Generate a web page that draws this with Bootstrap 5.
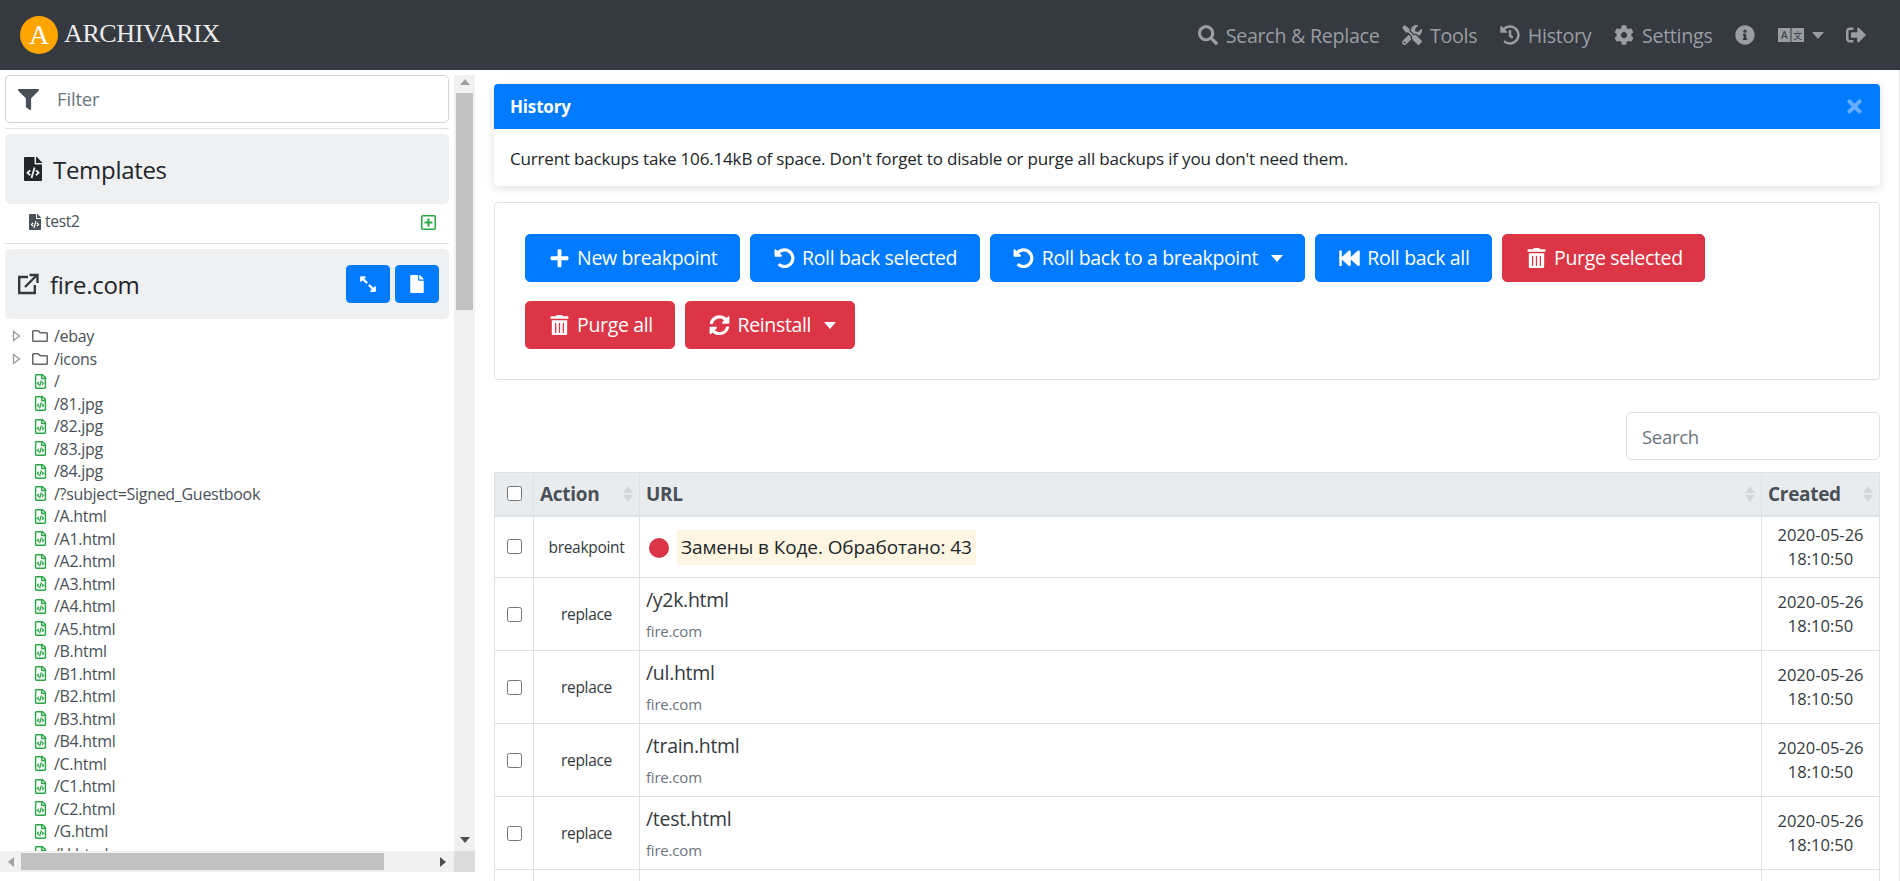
<!DOCTYPE html>
<html lang="en">
<head>
  <meta charset="UTF-8" />
  <meta name="viewport" content="width=device-width, initial-scale=1.0"/>
  <title>History - Archivarix</title>
  <link href="https://cdn.jsdelivr.net/npm/bootstrap@5.3.0/dist/css/bootstrap.min.css" rel="stylesheet"/>
  <style>
    html, body { height: 881px; overflow: hidden; }
    body { font-family: "Open Sans", sans-serif; font-size: 17px; letter-spacing: -.17px; color: #212529; background: #fff; }
    .ico { width: 1em; height: 1em; fill: currentColor; flex: none; }
    .arc-nav { height: 70px; background: #343a40; padding: 0 34px 0 20px; }
    .arc-logo { width: 38px; height: 38px; border-radius: 50%; background: #ffa500; color: #fff; font: 28px/38px "Liberation Serif", serif; text-align: center; }
    .arc-name { font: 26px "Liberation Serif", serif; color: #ebebeb; letter-spacing: -.4px; margin: 0 0 3px 6px; }
    .arc-link { color: #9a9da1; font-size: 19.7px; letter-spacing: -.3px; text-decoration: none; display: flex; align-items: center; gap: 8px; }
    .arc-link .ico { font-size: 20px; }
    .arc-links { gap: 22.5px; margin-top: 1px; }
    .caret-down { border-top: 7px solid currentColor; border-left: 6px solid transparent; border-right: 6px solid transparent; display: inline-block; }
    .arc-wrap { height: 811px; }
    .side { width: 475px; flex: none; padding-bottom: 9px; }
    .side-body { min-height: 0; }
    .side-in { padding: 5px 5px 0; overflow: hidden; min-width: 0; }
    .filter-box { height: 48px; border: 1px solid #ced4da; border-radius: 5px; padding: 0 12px; gap: 18px; color: #6c757d; font-size: 18.5px; }
    .filter-box .ico { color: #495057; font-size: 21px; }
    .side-rule { border-top: 1px solid #dee2e6; margin: 5px 0; }
    .side-head { height: 70px; background: #eff0f2; border-radius: 5px; font-size: 24px; letter-spacing: -.3px; color: #212529; }
    .head-plain { padding: 0 16px; gap: 8px; }
    .head-site { padding: 0 10px 0 12px; }
    .head-label { margin-top: 2px; }
    .site-title { gap: 11px; }
    .site-btns { gap: 5px; }
    .side-tpl { height: 34px; font-size: 15.5px; letter-spacing: -.3px; color: #495057; padding: 2px 13px 0 22px; }
    .side-tpl .ico { font-size: 16px; margin-right: 2px; }
    .side-btn { width: 44px; height: 38px; padding: 0; display: flex; align-items: center; justify-content: center; background: #007bff; border-color: #007bff; border-radius: 4px; }
    .side-btn .ico { font-size: 18px; }
    .tree { padding-top: 6px; font-size: 16px; letter-spacing: -.3px; color: #495057; }
    .tree-row { height: 22.5px; line-height: 22.5px; display: flex; align-items: center; white-space: nowrap; padding-left: 28px; }
    .tree-row .ico { color: #28a745; font-size: 15px; margin-right: 6px; }
    .tree-dir { padding-left: 7px; }
    .tree-dir .arrow { width: 9px; height: 12px; margin-right: 11px; flex: none; }
    .tree-dir .ico { color: #666; font-size: 16px; margin-right: 6px; }
    .vbar { width: 21px; flex: none; background: #f1f1f1; margin-top: 5px; padding: 0 2px; }
    .vthumb { height: 217px; background: #c1c1c1; }
    .hbar { height: 21px; background: #f1f1f1; flex: none; }
    .hbar-end { width: 21px; }
    .hthumb { width: 363px; height: 17px; background: #c1c1c1; }
    .sb-up { height: 0; border-bottom: 6px solid #a0a0a0; border-left: 5px solid transparent; border-right: 5px solid transparent; width: 0; }
    .sb-down { height: 0; border-top: 6px solid #505050; border-left: 5px solid transparent; border-right: 5px solid transparent; width: 0; }
    .sb-left { width: 0; border-right: 6px solid #a0a0a0; border-top: 5px solid transparent; border-bottom: 5px solid transparent; }
    .sb-right { width: 0; border-left: 6px solid #505050; border-top: 5px solid transparent; border-bottom: 5px solid transparent; }
    .sb-corner { width: 21px; height: 21px; background: #dcdcdc; }
    .arc-main { padding: 14px 19px 0 19px; min-width: 0; overflow: hidden; border-right: 1px solid #e6e6e6; }
    .hist-card { border: 0; border-radius: 4px; box-shadow: 0 2px 10px rgba(0,0,0,.13); margin-bottom: 16px; }
    .hist-head { height: 45px; background: #007bff; color: #fff; font-weight: 700; font-size: 17px; padding: 0 15px 0 16px; border-radius: 4px 4px 0 0; }
    .hist-head .ico { font-size: 21px; color: #66aeff; }
    .hist-text { height: 57px; padding: 2px 15px 0 16px; }
    .act-card { border: 1px solid #dee2e6; border-radius: 4px; height: 178px; padding: 31px 30px; row-gap: 19px; margin-bottom: 32px; }
    .act-row { column-gap: 10px; }
    .act-btn { height: 48px; padding: 0 21.5px 0 22.6px; font-size: 19.5px; letter-spacing: -.35px; display: inline-flex; align-items: center; gap: 7.5px; border-radius: 5px; color: #fff; white-space: nowrap; }
    .act-btn.btn-primary { background: #007bff; border-color: #007bff; }
    .act-btn.btn-danger { background: #dc3545; border-color: #dc3545; }
    .act-btn.act-short { padding-right: 18px; }
    .act-btn .ico { font-size: 20.5px; width: 21px; }
    .act-btn .caret-down { margin-left: 5px; }
    .search-box { width: 254px; height: 48px; font-size: 18.5px; letter-spacing: -.3px; border-radius: 5px; margin-bottom: 12px; padding-left: 15px; }
    .search-box::placeholder { color: #6c757d; }
    .hist-table { table-layout: fixed; width: 1386px; margin: 0; border-color: #dee2e6; }
    .hist-table th, .hist-table td { padding: 0 6px; vertical-align: middle; border-color: #dee2e6; }
    .hist-table thead th { height: 43px; background: #e9ecef; color: #495057; font-size: 19px; font-weight: 700; letter-spacing: -.3px; border-bottom: 2px solid #dee2e6; }
    .hist-table tbody tr { height: 73px; }
    .hist-table tbody tr.row-bp { height: 62px; }
    .hist-table tbody .col-act { padding-top: 2px; }
    .hist-table tbody .bp-cell { padding-top: 2px; }
    .col-chk { width: 39px; text-align: center; }
    .col-act { width: 106px; text-align: center; font-size: 15.5px; letter-spacing: -.3px; color: #343a40; }
    .col-date { width: 118px; text-align: center; font-size: 16.5px; letter-spacing: 0; line-height: 24px; color: #343a40; }
    .chk-box { width: 15px; height: 15px; display: block; margin: 0 auto; }
    .sort-mark { display: flex; flex-direction: column; gap: 2px; flex: none; }
    .sort-mark i { display: block; width: 0; border-left: 5px solid transparent; border-right: 5px solid transparent; }
    .sort-mark i:first-child { border-bottom: 7px solid #d4d7da; }
    .sort-mark i:last-child { border-top: 7px solid #d4d7da; }
    .bp-dot { width: 20px; height: 20px; border-radius: 50%; background: #dc3545; flex: none; margin-left: 3px; margin-right: 8px; }
    .bp-text { background: #fdf6e3; padding: 0 4px; font-size: 19px; line-height: 35px; letter-spacing: -.1px; }
    .url-main { font-size: 19.5px; letter-spacing: -.3px; color: #343a40; line-height: 27px; margin-top: -1px; }
    .url-host { font-size: 15px; letter-spacing: -.2px; color: #6c757d; line-height: 22px; margin-top: 7px; }
  </style>
</head>
<body>
  <svg width="0" height="0" class="position-absolute">
    <symbol id="i-search" viewBox="0 0 512 512"><path d="M505 442.7L405.3 343c-4.5-4.5-10.6-7-17-7H372c27.6-35.3 44-79.7 44-128C416 93.1 322.9 0 208 0S0 93.1 0 208s93.1 208 208 208c48.3 0 92.7-16.4 128-44v16.3c0 6.4 2.5 12.5 7 17l99.7 99.7c9.4 9.4 24.6 9.4 33.9 0l28.3-28.3c9.4-9.4 9.4-24.6.1-34zM208 336c-70.7 0-128-57.2-128-128 0-70.7 57.2-128 128-128 70.7 0 128 57.2 128 128 0 70.7-57.2 128-128 128z"/></symbol>
    <symbol id="i-filter" viewBox="0 0 512 512"><path d="M487.976 0H24.028C2.71 0-8.047 25.866 7.058 40.971L192 225.941V432c0 7.831 3.821 15.17 10.237 19.662l80 55.98C298.02 518.69 320 507.493 320 487.98V225.941l184.947-184.97C520.021 25.896 509.338 0 487.976 0z"/></symbol>
    <symbol id="i-tools" viewBox="0 0 512 512"><path d="M501.1 395.7L384 278.6c-23.1-23.1-57.6-27.6-85.4-13.9L192 158.1V96L64 0 0 64l96 128h62.1l106.6 106.6c-13.6 27.8-9.2 62.3 13.9 85.4l117.1 117.1c14.6 14.6 38.2 14.6 52.7 0l52.7-52.7c14.5-14.6 14.5-38.2 0-52.7zM331.7 225c28.3 0 54.9 11 74.9 31l19.4 19.4c15.8-6.9 30.8-16.5 43.8-29.5 37.1-37.1 49.7-89.3 37.9-136.7-2.2-9-13.5-12.1-20.1-5.5l-74.4 74.4-67.9-11.3L334 98.9l74.4-74.4c6.6-6.6 3.4-17.9-5.7-20.2-47.4-11.7-99.6.9-136.6 37.9-28.5 28.5-41.9 66.1-41.2 103.6l82.1 82.1c8.1-1.9 16.5-2.9 24.7-2.9zm-103.9 82l-56.7-56.7L18.7 402.8c-25 25-25 65.5 0 90.5s65.5 25 90.5 0l123.6-123.6c-7.6-19.9-9.9-41.6-5-62.7zM64 472c-13.2 0-24-10.8-24-24 0-13.3 10.7-24 24-24s24 10.7 24 24c0 13.2-10.7 24-24 24z"/></symbol>
    <symbol id="i-history" viewBox="0 0 512 512"><path d="M504 255.531c.253 136.64-111.18 248.372-247.82 248.468-59.015.042-113.223-20.53-155.822-54.911-11.077-8.94-11.905-25.541-1.839-35.607l11.267-11.267c8.609-8.609 22.353-9.551 31.891-1.984C173.062 425.135 212.781 440 256 440c101.705 0 184-82.311 184-184 0-101.705-82.311-184-184-184-48.814 0-93.149 18.969-126.068 49.932l50.754 50.754c10.08 10.08 2.941 27.314-11.313 27.314H24c-8.837 0-16-7.163-16-16V38.627c0-14.254 17.234-21.393 27.314-11.314l49.372 49.372C129.209 34.136 189.552 8 256 8c136.81 0 247.747 110.78 248 247.531zm-180.912 78.784l9.823-12.63c8.138-10.463 6.253-25.542-4.21-33.679L288 256.349V152c0-13.255-10.745-24-24-24h-16c-13.255 0-24 10.745-24 24v135.651l65.409 50.874c10.463 8.137 25.541 6.253 33.679-4.21z"/></symbol>
    <symbol id="i-cog" viewBox="0 0 512 512"><path d="M487.4 315.7l-42.6-24.6c4.3-23.2 4.3-47 0-70.2l42.6-24.6c4.9-2.8 7.1-8.6 5.5-14-11.1-35.6-30-67.8-54.7-94.6-3.8-4.1-10-5.1-14.8-2.3L380.8 110c-17.9-15.4-38.5-27.3-60.8-35.1V25.8c0-5.6-3.9-10.5-9.4-11.7-36.7-8.2-74.3-7.8-109.2 0-5.5 1.2-9.4 6.1-9.4 11.7V75c-22.2 7.9-42.8 19.8-60.8 35.1L88.7 85.5c-4.9-2.8-11-1.9-14.8 2.3-24.7 26.7-43.6 58.9-54.7 94.6-1.7 5.4.6 11.2 5.5 14L67.3 221c-4.3 23.2-4.3 47 0 70.2l-42.6 24.6c-4.9 2.8-7.1 8.6-5.5 14 11.1 35.6 30 67.8 54.7 94.6 3.8 4.1 10 5.1 14.8 2.3l42.6-24.6c17.9 15.4 38.5 27.3 60.8 35.1v49.2c0 5.6 3.9 10.5 9.4 11.7 36.7 8.2 74.3 7.8 109.2 0 5.5-1.2 9.4-6.1 9.4-11.7v-49.2c22.2-7.9 42.8-19.8 60.8-35.1l42.6 24.6c4.9 2.8 11 1.9 14.8-2.3 24.7-26.7 43.6-58.9 54.7-94.6 1.5-5.5-.7-11.3-5.6-14.1zM256 336c-44.1 0-80-35.9-80-80s35.9-80 80-80 80 35.9 80 80-35.9 80-80 80z"/></symbol>
    <symbol id="i-info" viewBox="0 0 512 512"><path d="M256 8C119.043 8 8 119.083 8 256c0 136.997 111.043 248 248 248s248-111.003 248-248C504 119.083 392.957 8 256 8zm0 110c23.196 0 42 18.804 42 42s-18.804 42-42 42-42-18.804-42-42 18.804-42 42-42zm56 254c0 6.627-5.373 12-12 12h-88c-6.627 0-12-5.373-12-12v-24c0-6.627 5.373-12 12-12h12v-64h-12c-6.627 0-12-5.373-12-12v-24c0-6.627 5.373-12 12-12h64c6.627 0 12 5.373 12 12v100h12c6.627 0 12 5.373 12 12v24z"/></symbol>
    <symbol id="i-out" viewBox="0 0 512 512"><path d="M497 273L329 441c-15 15-41 4.5-41-17v-96H152c-13.3 0-24-10.7-24-24v-96c0-13.3 10.7-24 24-24h136V88c0-21.4 25.9-32 41-17l168 168c9.3 9.4 9.3 24.6 0 34zM192 436v-40c0-6.6-5.4-12-12-12H96c-17.7 0-32-14.3-32-32V160c0-17.7 14.3-32 32-32h84c6.6 0 12-5.4 12-12V76c0-6.6-5.4-12-12-12H96c-53 0-96 43-96 96v192c0 53 43 96 96 96h84c6.6 0 12-5.4 12-12z"/></symbol>
    <symbol id="i-code" viewBox="0 0 384 512"><path d="M384 121.941V128H256V0h6.059c6.365 0 12.47 2.529 16.971 7.029l97.941 97.941A24.005 24.005 0 0 1 384 121.941zM248 160c-13.2 0-24-10.8-24-24V0H24C10.745 0 0 10.745 0 24v464c0 13.255 10.745 24 24 24h336c13.255 0 24-10.745 24-24V160H248zM123.206 400.505a5.4 5.4 0 0 1-7.633.246l-64.866-60.812a5.4 5.4 0 0 1 0-7.879l64.866-60.812a5.4 5.4 0 0 1 7.633.246l19.579 20.885a5.4 5.4 0 0 1-.372 7.747L101.65 336l40.763 35.874a5.4 5.4 0 0 1 .372 7.747l-19.579 20.884zm51.295 50.479l-27.453-7.97a5.402 5.402 0 0 1-3.681-6.692l61.44-211.626a5.402 5.402 0 0 1 6.692-3.681l27.452 7.97a5.4 5.4 0 0 1 3.68 6.692l-61.44 211.626a5.397 5.397 0 0 1-6.69 3.681zm160.792-111.045l-64.866 60.812a5.4 5.4 0 0 1-7.633-.246l-19.58-20.885a5.4 5.4 0 0 1 .372-7.747L284.35 336l-40.763-35.874a5.4 5.4 0 0 1-.372-7.747l19.58-20.885a5.4 5.4 0 0 1 7.633-.246l64.866 60.812a5.4 5.4 0 0 1-.001 7.879z"/></symbol>
    <symbol id="i-code-o" viewBox="0 0 384 512"><path d="M149.9 349.1l-.2-.2-32.8-28.9 32.8-28.9c3.6-3.2 4-8.8.8-12.4l-.2-.2-17.4-18.6c-3.4-3.6-9-3.7-12.4-.4l-57.7 54.1c-3.7 3.5-3.7 9.4 0 12.8l57.7 54.1c1.6 1.5 3.8 2.4 6 2.4 2.4 0 4.8-1 6.4-2.8l17.4-18.6c3.3-3.5 3.1-9.1-.4-12.4zm220-251.2L286 14C277 5 264.8-.1 252.1-.1H48C21.5 0 0 21.5 0 48v416c0 26.5 21.5 48 48 48h288c26.5 0 48-21.5 48-48V131.9c0-12.7-5.1-25-14.1-34zM256 51.9l76.1 76.1H256zM336 464H48V48h160v104c0 13.3 10.7 24 24 24h104zM209.6 214c-4.7-1.4-9.5 1.3-10.9 6L144 408.1c-1.4 4.7 1.3 9.6 6 10.9l24.4 7.1c4.7 1.4 9.6-1.4 10.9-6L240 231.9c1.4-4.7-1.3-9.6-6-10.9zm24.5 76.9l.2.2 32.8 28.9-32.8 28.9c-3.6 3.2-4 8.8-.8 12.4l.2.2 17.4 18.6c3.3 3.5 8.9 3.7 12.4.4l57.7-54.1c3.7-3.5 3.7-9.4 0-12.8l-57.7-54.1c-3.5-3.3-9.1-3.2-12.4.4l-17.4 18.6c-3.3 3.5-3.1 9.1.4 12.4z"/></symbol>
    <symbol id="i-folder" viewBox="0 0 512 512"><path d="M464 128H272l-54.63-54.63c-6-6-14.14-9.37-22.63-9.37H48C21.49 64 0 85.49 0 112v288c0 26.51 21.49 48 48 48h416c26.51 0 48-21.49 48-48V176c0-26.51-21.49-48-48-48zm0 272H48V112h140.12l54.63 54.63c6 6 14.14 9.37 22.63 9.37H464v224z"/></symbol>
    <symbol id="i-expand" viewBox="0 0 448 512"><g transform="matrix(-1 0 0 1 448 0)"><path d="M212.686 315.314L120 408l32.922 31.029c15.12 15.12 4.412 40.971-16.97 40.971h-112C10.697 480 0 469.255 0 456V344c0-21.382 25.803-32.09 40.922-16.971L72 360l92.686-92.686c6.248-6.248 16.379-6.248 22.627 0l25.373 25.373c6.249 6.248 6.249 16.378 0 22.627zm22.628-118.628L328 104l-32.922-31.029C279.958 57.851 290.666 32 312.048 32h112C437.303 32 448 42.745 448 56v112c0 21.382-25.803 32.09-40.922 16.971L376 152l-92.686 92.686c-6.248 6.248-16.379 6.248-22.627 0l-25.373-25.373c-6.249-6.248-6.249-16.378 0-22.627z"/></g></symbol>
    <symbol id="i-file" viewBox="0 0 384 512"><path d="M224 136V0H24C10.7 0 0 10.7 0 24v464c0 13.3 10.7 24 24 24h336c13.3 0 24-10.7 24-24V160H248c-13.2 0-24-10.8-24-24zm160-14.1v6.1H256V0h6.1c6.4 0 12.5 2.5 17 7l97.9 98c4.5 4.5 7 10.6 7 16.9z"/></symbol>
    <symbol id="i-plus" viewBox="0 0 448 512"><path d="M416 208H272V64c0-17.67-14.33-32-32-32h-32c-17.67 0-32 14.33-32 32v144H32c-17.67 0-32 14.33-32 32v32c0 17.67 14.33 32 32 32h144v144c0 17.67 14.33 32 32 32h32c17.67 0 32-14.33 32-32V304h144c17.67 0 32-14.33 32-32v-32c0-17.67-14.33-32-32-32z"/></symbol>
    <symbol id="i-undo" viewBox="0 0 512 512"><path d="M255.545 8c-66.269.119-126.438 26.233-170.86 68.685L48.971 40.971C33.851 25.851 8 36.559 8 57.941V192c0 13.255 10.745 24 24 24h134.059c21.382 0 32.09-25.851 16.971-40.971l-41.75-41.75c30.864-28.899 70.801-44.907 113.23-45.273 92.398-.798 170.283 73.977 169.484 169.442C423.236 348.009 349.816 424 256 424c-41.127 0-79.997-14.678-110.63-41.556-4.743-4.161-11.906-3.908-16.368.553L89.34 422.659c-4.872 4.872-4.631 12.815.482 17.433C133.798 479.813 192.074 504 256 504c136.966 0 247.999-111.033 248-247.998C504.001 119.193 392.354 7.755 255.545 8z"/></symbol>
    <symbol id="i-back" viewBox="0 0 512 512"><path d="M0 436V76c0-6.6 5.4-12 12-12h40c6.6 0 12 5.4 12 12v151.9L235.5 71.4C256.1 54.3 288 68.6 288 96v131.9L459.5 71.4C480.1 54.3 512 68.6 512 96v320c0 27.4-31.9 41.7-52.5 24.6L288 285.3V416c0 27.4-31.9 41.7-52.5 24.6L64 285.3V436c0 6.6-5.4 12-12 12H12c-6.6 0-12-5.4-12-12z"/></symbol>
    <symbol id="i-trash" viewBox="0 0 448 512"><path d="M32 464a48 48 0 0 0 48 48h288a48 48 0 0 0 48-48V128H32zm272-256a16 16 0 0 1 32 0v224a16 16 0 0 1-32 0zm-96 0a16 16 0 0 1 32 0v224a16 16 0 0 1-32 0zm-96 0a16 16 0 0 1 32 0v224a16 16 0 0 1-32 0zM432 32H312l-9.4-18.7A24 24 0 0 0 281.1 0H166.8a23.72 23.72 0 0 0-21.4 13.3L136 32H16A16 16 0 0 0 0 48v32a16 16 0 0 0 16 16h416a16 16 0 0 0 16-16V48a16 16 0 0 0-16-16z"/></symbol>
    <symbol id="i-sync" viewBox="0 0 512 512"><path d="M370.72 133.28C339.458 104.008 298.888 87.962 255.848 88c-77.458.068-144.328 53.178-162.791 126.85-1.344 5.363-6.122 9.15-11.651 9.15H24.103c-7.498 0-13.194-6.807-11.807-14.176C33.933 94.924 134.813 8 256 8c66.448 0 126.791 26.136 171.315 68.685L463.03 40.97C478.149 25.851 504 36.559 504 57.941V192c0 13.255-10.745 24-24 24H345.941c-21.382 0-32.09-25.851-16.971-40.971l41.75-41.749zM32 296h134.059c21.382 0 32.09 25.851 16.971 40.971l-41.75 41.75c31.262 29.273 71.835 45.319 114.876 45.28 77.418-.07 144.315-53.144 162.787-126.849 1.344-5.363 6.122-9.15 11.651-9.15h57.304c7.498 0 13.194 6.807 11.807 14.176C478.067 417.076 377.187 504 256 504c-66.448 0-126.791-26.136-171.315-68.685L48.97 471.03C33.851 486.149 8 475.441 8 454.059V320c0-13.255 10.745-24 24-24z"/></symbol>
    <symbol id="i-times" viewBox="0 0 352 512"><path d="M242.72 256l100.07-100.07c12.28-12.28 12.28-32.19 0-44.48l-22.24-22.24c-12.28-12.28-32.19-12.28-44.48 0L176 189.28 75.93 89.21c-12.28-12.28-32.19-12.28-44.48 0L9.21 111.45c-12.28 12.28-12.28 32.19 0 44.48L109.28 256 9.21 356.07c-12.28 12.28-12.28 32.19 0 44.48l22.24 22.24c12.28 12.28 32.2 12.28 44.48 0L176 322.72l100.07 100.07c12.28 12.28 32.2 12.28 44.48 0l22.24-22.24c12.28-12.28 12.28-32.19 0-44.48L242.72 256z"/></symbol>
    <symbol id="i-arrow" viewBox="0 0 9 12"><path d="M1.5 1.5L7.5 6L1.5 10.5Z" fill="#fff" stroke="#999" stroke-width="1.3"/></symbol>
  </svg>

  <nav class="arc-nav d-flex align-items-center justify-content-between">
    <div class="d-flex align-items-center">
      <div class="arc-logo">A</div>
      <div class="arc-name">ARCHIVARIX</div>
    </div>
    <div class="arc-links d-flex align-items-center">
      <a class="arc-link" href="#"><svg class="ico"><use href="#i-search"/></svg>Search &amp; Replace</a>
      <a class="arc-link" href="#"><svg class="ico"><use href="#i-tools"/></svg>Tools</a>
      <a class="arc-link" href="#"><svg class="ico"><use href="#i-history"/></svg>History</a>
      <a class="arc-link" href="#"><svg class="ico"><use href="#i-cog"/></svg>Settings</a>
      <a class="arc-link" href="#"><svg class="ico"><use href="#i-info"/></svg></a>
      <a class="arc-link" href="#">
        <svg width="26" height="14" viewBox="0 0 26 14"><rect width="12.5" height="14" fill="#9a9da1"/><rect x="13.5" width="12.5" height="14" fill="#9a9da1"/><text x="6.2" y="11" font-size="10" text-anchor="middle" fill="#343a40" font-family="Liberation Sans">A</text><text x="19.7" y="11" font-size="9" text-anchor="middle" fill="#343a40" font-family="Noto Sans CJK SC">文</text></svg>
        <span class="caret-down"></span>
      </a>
      <a class="arc-link" href="#"><svg class="ico"><use href="#i-out"/></svg></a>
    </div>
  </nav>

  <div class="arc-wrap d-flex">
    <aside class="side d-flex flex-column">
      <div class="side-body d-flex flex-grow-1">
        <div class="side-in flex-grow-1">
          <div class="filter-box d-flex align-items-center"><svg class="ico"><use href="#i-filter"/></svg>Filter</div>
          <div class="side-rule"></div>
          <div class="side-head head-plain d-flex align-items-center"><svg class="ico"><use href="#i-code"/></svg><span class="head-label">Templates</span></div>
          <div class="side-tpl d-flex align-items-center justify-content-between">
            <span class="d-flex align-items-center"><svg class="ico"><use href="#i-code"/></svg>test2</span>
            <svg width="15" height="15" viewBox="0 0 15 15"><rect x=".75" y=".75" width="13.5" height="13.5" rx="1" fill="none" stroke="#28a745" stroke-width="1.5"/><path d="M7.5 3.5v8M3.5 7.5h8" stroke="#28a745" stroke-width="2"/></svg>
          </div>
          <div class="side-rule"></div>
          <div class="side-head head-site d-flex align-items-center justify-content-between">
            <span class="site-title d-flex align-items-center">
              <svg width="22" height="22" viewBox="0 0 22 22" fill="none" stroke="#343a40" stroke-width="2.4"><path d="M11 4H2.2v16h15.6v-8"/><path d="M8 14L19 3M12.5 2h8v8" /></svg>
              <span class="head-label">fire.com</span>
            </span>
            <span class="site-btns d-flex">
              <button class="btn btn-primary side-btn"><svg class="ico"><use href="#i-expand"/></svg></button>
              <button class="btn btn-primary side-btn"><svg class="ico"><use href="#i-file"/></svg></button>
            </span>
          </div>
          <div class="tree">
            <div class="tree-row tree-dir"><svg class="arrow"><use href="#i-arrow"/></svg><svg class="ico"><use href="#i-folder"/></svg>/ebay</div>
            <div class="tree-row tree-dir"><svg class="arrow"><use href="#i-arrow"/></svg><svg class="ico"><use href="#i-folder"/></svg>/icons</div>
            <div class="tree-row"><svg class="ico"><use href="#i-code-o"/></svg>/</div>
            <div class="tree-row"><svg class="ico"><use href="#i-code-o"/></svg>/81.jpg</div>
            <div class="tree-row"><svg class="ico"><use href="#i-code-o"/></svg>/82.jpg</div>
            <div class="tree-row"><svg class="ico"><use href="#i-code-o"/></svg>/83.jpg</div>
            <div class="tree-row"><svg class="ico"><use href="#i-code-o"/></svg>/84.jpg</div>
            <div class="tree-row"><svg class="ico"><use href="#i-code-o"/></svg>/?subject=Signed_Guestbook</div>
            <div class="tree-row"><svg class="ico"><use href="#i-code-o"/></svg>/A.html</div>
            <div class="tree-row"><svg class="ico"><use href="#i-code-o"/></svg>/A1.html</div>
            <div class="tree-row"><svg class="ico"><use href="#i-code-o"/></svg>/A2.html</div>
            <div class="tree-row"><svg class="ico"><use href="#i-code-o"/></svg>/A3.html</div>
            <div class="tree-row"><svg class="ico"><use href="#i-code-o"/></svg>/A4.html</div>
            <div class="tree-row"><svg class="ico"><use href="#i-code-o"/></svg>/A5.html</div>
            <div class="tree-row"><svg class="ico"><use href="#i-code-o"/></svg>/B.html</div>
            <div class="tree-row"><svg class="ico"><use href="#i-code-o"/></svg>/B1.html</div>
            <div class="tree-row"><svg class="ico"><use href="#i-code-o"/></svg>/B2.html</div>
            <div class="tree-row"><svg class="ico"><use href="#i-code-o"/></svg>/B3.html</div>
            <div class="tree-row"><svg class="ico"><use href="#i-code-o"/></svg>/B4.html</div>
            <div class="tree-row"><svg class="ico"><use href="#i-code-o"/></svg>/C.html</div>
            <div class="tree-row"><svg class="ico"><use href="#i-code-o"/></svg>/C1.html</div>
            <div class="tree-row"><svg class="ico"><use href="#i-code-o"/></svg>/C2.html</div>
            <div class="tree-row"><svg class="ico"><use href="#i-code-o"/></svg>/G.html</div>
            <div class="tree-row"><svg class="ico"><use href="#i-code-o"/></svg>/H.html</div>
          </div>
        </div>
        <div class="vbar d-flex flex-column align-items-center justify-content-between">
          <div class="w-100 d-flex flex-column align-items-center">
            <div class="sb-up my-1"></div><div class="vthumb w-100 mt-1"></div>
          </div>
          <div class="sb-down mb-2"></div>
        </div>
      </div>
      <div class="hbar d-flex align-items-center">
        <div class="hbar-end d-flex align-items-center justify-content-center"><div class="sb-left"></div></div>
        <div class="hthumb"></div>
        <div class="flex-grow-1 d-flex justify-content-end pe-2"><div class="sb-right"></div></div>
        <div class="sb-corner"></div>
      </div>
    </aside>

    <main class="arc-main flex-grow-1">
      <div class="card hist-card">
        <div class="hist-head d-flex align-items-center justify-content-between">History <svg class="ico"><use href="#i-times"/></svg></div>
        <div class="hist-text d-flex align-items-center">Current backups take 106.14kB of space. Don't forget to disable or purge all backups if you don't need them.</div>
      </div>

      <div class="act-card d-flex flex-column">
        <div class="act-row d-flex">
          <button class="btn btn-primary act-btn"><svg class="ico"><use href="#i-plus"/></svg>New breakpoint</button>
          <button class="btn btn-primary act-btn"><svg class="ico"><use href="#i-undo"/></svg>Roll back selected</button>
          <button class="btn btn-primary act-btn"><svg class="ico"><use href="#i-undo"/></svg>Roll back to a breakpoint<span class="caret-down"></span></button>
          <button class="btn btn-primary act-btn"><svg class="ico"><use href="#i-back"/></svg>Roll back all</button>
          <button class="btn btn-danger act-btn"><svg class="ico"><use href="#i-trash"/></svg>Purge selected</button>
        </div>
        <div class="act-row d-flex">
          <button class="btn btn-danger act-btn"><svg class="ico"><use href="#i-trash"/></svg>Purge all</button>
          <button class="btn btn-danger act-btn act-short"><svg class="ico"><use href="#i-sync"/></svg>Reinstall<span class="caret-down"></span></button>
        </div>
      </div>

      <div class="d-flex justify-content-end"><input type="text" class="form-control search-box" placeholder="Search"/></div>

      <table class="table table-bordered hist-table">
        <thead>
          <tr>
            <th class="col-chk"><input type="checkbox" class="chk-box"/></th>
            <th class="col-act"><div class="d-flex align-items-center justify-content-between">Action<span class="sort-mark"><i></i><i></i></span></div></th>
            <th><div class="d-flex align-items-center justify-content-between">URL<span class="sort-mark"><i></i><i></i></span></div></th>
            <th class="col-date"><div class="d-flex align-items-center justify-content-between">Created<span class="sort-mark"><i></i><i></i></span></div></th>
          </tr>
        </thead>
        <tbody>
          <tr class="row-bp">
            <td class="col-chk"><input type="checkbox" class="chk-box"/></td>
            <td class="col-act">breakpoint</td>
            <td class="bp-cell"><div class="d-flex align-items-center"><span class="bp-dot"></span><span class="bp-text">Замены в Коде. Обработано: 43</span></div></td>
            <td class="col-date">2020-05-26<br>18:10:50</td>
          </tr>
          <tr>
            <td class="col-chk"><input type="checkbox" class="chk-box"/></td>
            <td class="col-act">replace</td>
            <td><div class="url-main">/y2k.html</div><div class="url-host">fire.com</div></td>
            <td class="col-date">2020-05-26<br>18:10:50</td>
          </tr>
          <tr>
            <td class="col-chk"><input type="checkbox" class="chk-box"/></td>
            <td class="col-act">replace</td>
            <td><div class="url-main">/ul.html</div><div class="url-host">fire.com</div></td>
            <td class="col-date">2020-05-26<br>18:10:50</td>
          </tr>
          <tr>
            <td class="col-chk"><input type="checkbox" class="chk-box"/></td>
            <td class="col-act">replace</td>
            <td><div class="url-main">/train.html</div><div class="url-host">fire.com</div></td>
            <td class="col-date">2020-05-26<br>18:10:50</td>
          </tr>
          <tr>
            <td class="col-chk"><input type="checkbox" class="chk-box"/></td>
            <td class="col-act">replace</td>
            <td><div class="url-main">/test.html</div><div class="url-host">fire.com</div></td>
            <td class="col-date">2020-05-26<br>18:10:50</td>
          </tr>
          <tr>
            <td class="col-chk"></td>
            <td class="col-act"></td>
            <td></td>
            <td class="col-date"></td>
          </tr>
        </tbody>
      </table>
    </main>
  </div>
</body>
</html>
